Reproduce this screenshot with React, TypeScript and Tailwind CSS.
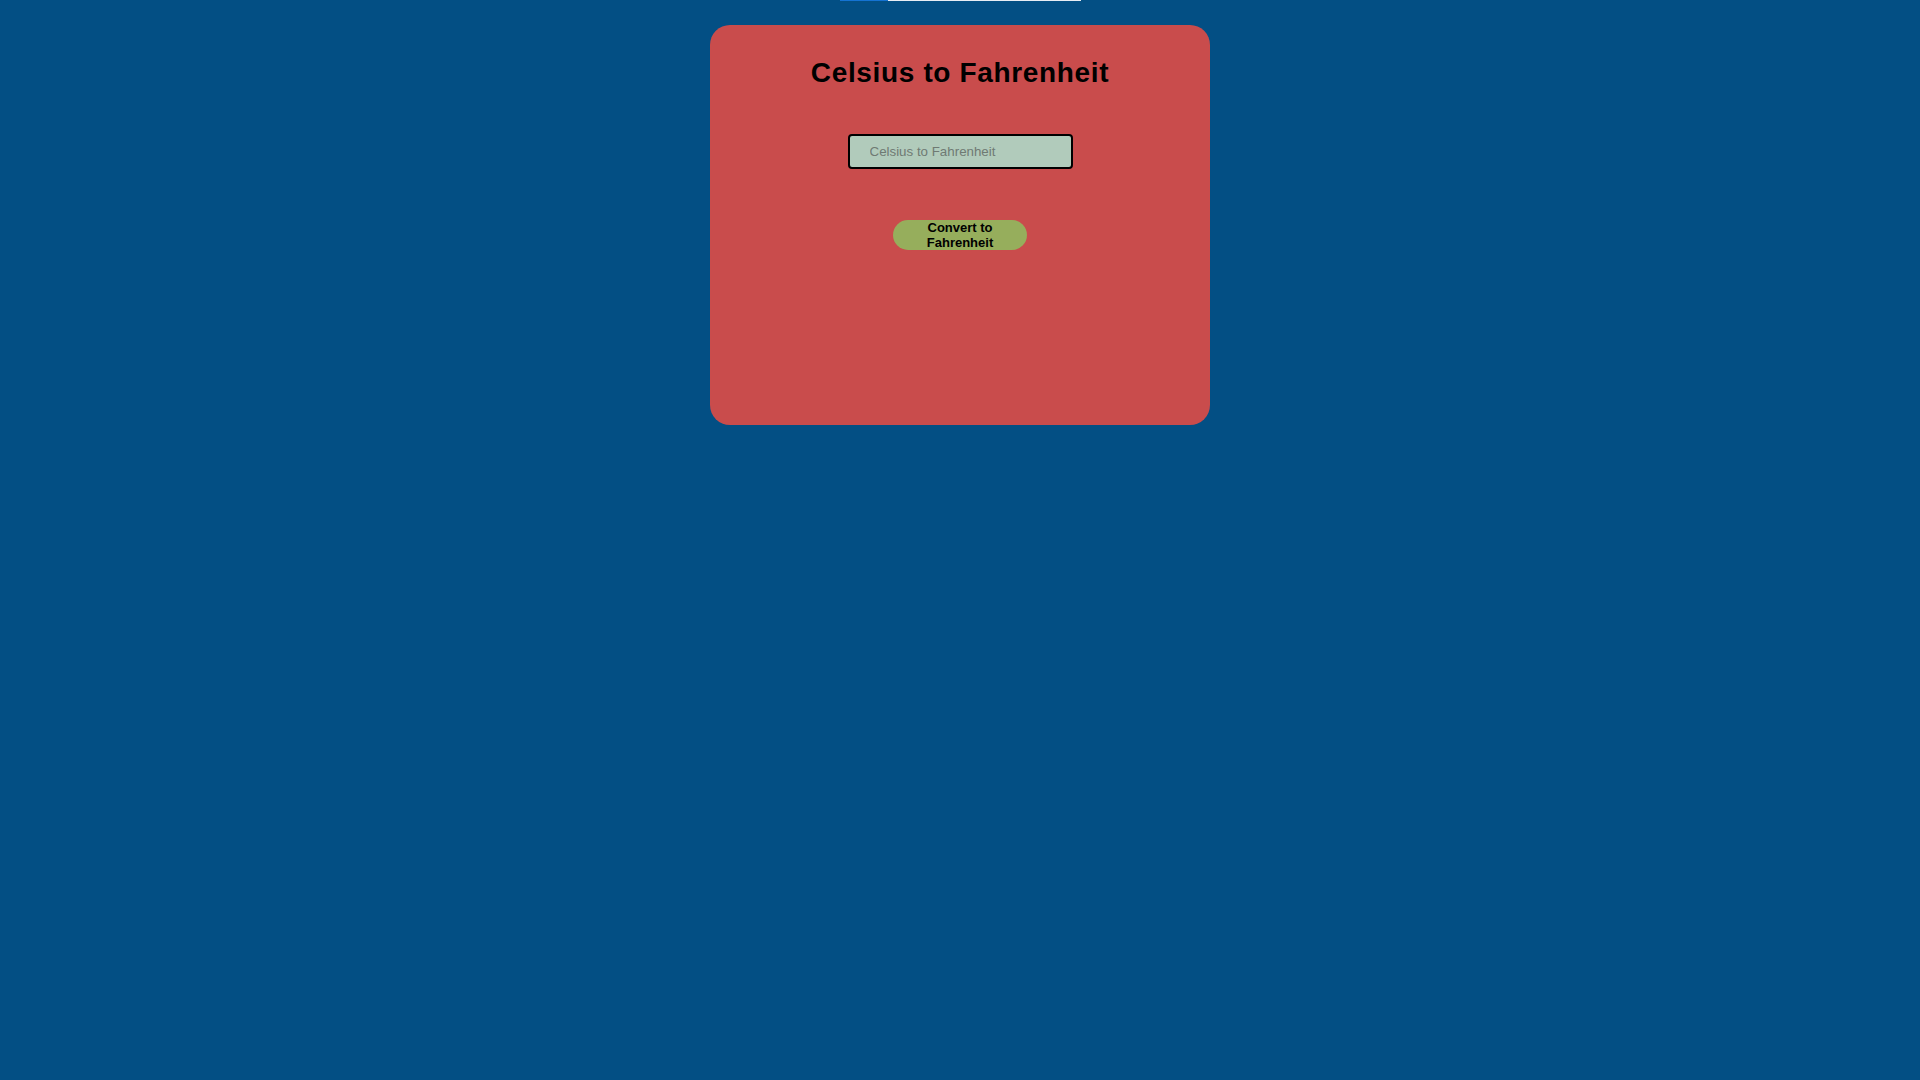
import { useState } from "react"

export default function App() {
  const [celsius, setCelsius] = useState("")

  return (
    <div className="min-h-screen bg-[#034f84] flex flex-col items-center font-['Liberation_Sans',Arial,sans-serif]">
      <div className="flex h-px w-[241px]">
        <div className="w-[48px] bg-[#1473d2]" />
        <div className="flex-1 bg-[#e8eef5]" />
      </div>

      <div className="mt-[24px] w-[500px] h-[400px] rounded-[20px] bg-[#c94c4c] flex flex-col items-center pt-[32px]">
        <h1 className="text-[28px] leading-[32px] font-bold tracking-[0.65px] text-black">
          Celsius to Fahrenheit
        </h1>

        <input
          type="text"
          value={celsius}
          onChange={(e) => setCelsius(e.target.value)}
          placeholder="Celsius to Fahrenheit"
          className="mt-[45px] w-[225px] h-[35px] rounded-[4px] border-2 border-black bg-[#b1cbbb] pl-[20px] pr-2 text-[13.33px] text-black placeholder:text-[#6f7a73] outline-none"
        />

        <button className="mt-[51px] w-[134px] h-[30px] rounded-full bg-[#96ae5c] px-[20px] text-[13px] leading-[15px] font-bold text-black">
          Convert to Fahrenheit
        </button>
      </div>
    </div>
  )
}
